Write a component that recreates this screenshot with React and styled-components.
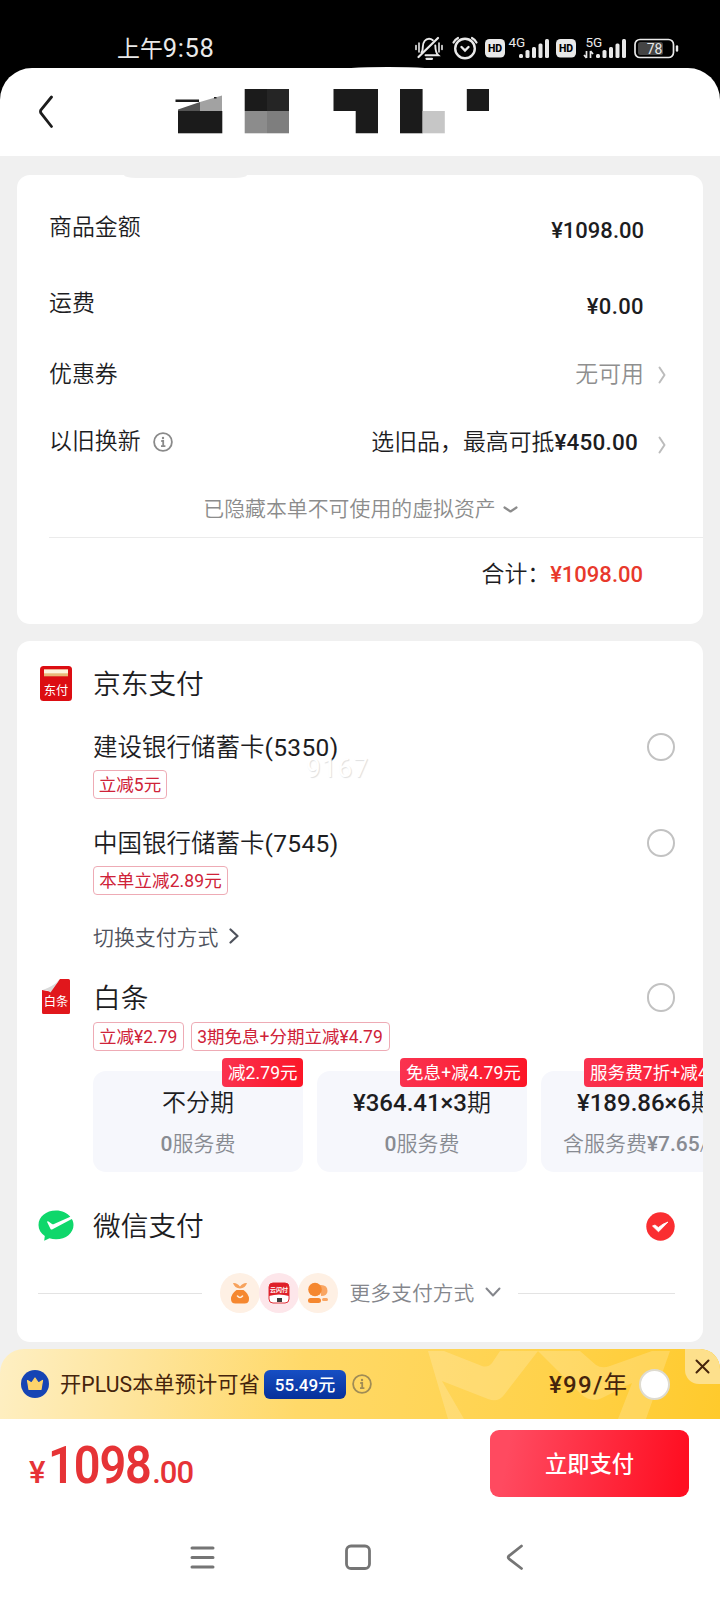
import styled, { createGlobalStyle } from 'styled-components';

const GlobalStyle = createGlobalStyle`
    * {
        box-sizing: border-box;
    }
    body {
        margin: 0;
        background-color: #f0f0f0;
        font-family: Roboto, "Noto Sans CJK SC", sans-serif;
        font-weight: 350;
        color: #1d1d1f;
    }
    svg {
        display: block;
        flex-shrink: 0;
    }
`;

const Page = styled.div`
    width: 720px;
    height: 1600px;
    display: flex;
    flex-direction: column;
    overflow: hidden;
    background-color: #f0f0f0;
`;

/* ---------- top ---------- */

const Top = styled.div`
    background-color: #000;
    height: 156px;
    flex-shrink: 0;
    display: flex;
    flex-direction: column;
`;

const StatusBar = styled.div`
    height: 68px;
    padding: 30px 41px 0 117px;
    display: flex;
    align-items: flex-start;
    justify-content: space-between;
    color: #e9e9e9;
`;

const Clock = styled.div`
    font-size: 22.9px;
    line-height: 37px;
    font-weight: 400;
    white-space: nowrap;
    b {
        font-size: 25.5px;
        font-weight: 400;
        letter-spacing: 0.6px;
    }
`;

const Header = styled.div`
    position: relative;
    height: 88px;
    padding-left: 39px;
    display: flex;
    align-items: flex-start;
    background-color: #fff;
    border-radius: 32px 32px 0 0;
    &:before {
        content: '';
        position: absolute;
        left: 336px;
        top: -1.5px;
        width: 104px;
        height: 6px;
        border-radius: 50%;
        background-color: #fff;
    }
`;

const BackButton = styled.div`
    margin-top: 27px;
    margin-right: 121px;
`;

const Title = styled.div`
    margin-top: 20px;
`;

/* ---------- cards ---------- */

const Card = styled.div`
    position: relative;
    flex-shrink: 0;
    width: 686px;
    height: ${(props) => props.$height}px;
    margin: ${(props) => props.$top}px 0 0 17px;
    padding-top: 14px;
    background-color: #fff;
    border-radius: 13px;
    overflow: hidden;
`;

const Smudge = styled.div`
    position: absolute;
    left: 107px;
    top: 0;
    width: 123px;
    height: 3px;
    background-color: #f0f0f0;
    border-radius: 0 0 12px 12px / 0 0 3px 3px;
`;

const PriceRow = styled.div`
    height: ${(props) => props.$height}px;
    padding: 2px 37px 0 32px;
    display: flex;
    align-items: center;
    font-size: 22.9px;
    line-height: 32px;
`;

const Label = styled.div`
    flex: 1;
    display: flex;
    align-items: center;
    gap: 12px;
`;

const Value = styled.div`
    margin-right: ${(props) => props.$right || 0}px;
    padding-top: ${(props) => props.$drop || 0}px;
    color: ${(props) => props.$color || '#1d1d1f'};
    white-space: nowrap;
`;

const Amount = styled.span`
    font-size: ${(props) => props.$size || 22}px;
    font-weight: 500;
    letter-spacing: ${(props) => props.$spacing || 0}px;
`;

const ArrowBox = styled.div`
    padding-top: ${(props) => props.$drop || 0}px;
`;

const HiddenNotice = styled.div`
    height: 63px;
    margin-left: 32px;
    padding: 6px 31px 0 0;
    display: flex;
    align-items: center;
    justify-content: center;
    gap: 7px;
    border-bottom: 1px solid #ebebeb;
    color: #8c8c8c;
    font-size: 20.9px;
    line-height: 30px;
`;

const TotalRow = styled.div`
    height: 73px;
    padding-right: 60px;
    display: flex;
    align-items: center;
    justify-content: flex-end;
    font-size: 22.9px;
    line-height: 32px;
    span {
        color: #e8392c;
    }
`;

/* ---------- payment ---------- */

const PayRow = styled.div`
    height: ${(props) => props.$height}px;
    margin-top: ${(props) => props.$top || 0}px;
    padding-right: 28px;
    display: flex;
    align-items: center;
`;

const IconCell = styled.div`
    width: 76px;
    padding: 0 0 ${(props) => props.$lift || 0}px 2px;
    display: flex;
    justify-content: center;
`;

const PayName = styled.div`
    flex: 1;
    padding-top: 2px;
    font-size: ${(props) => props.$size || 27.7}px;
    line-height: 40px;
    span {
        font-weight: 400;
        letter-spacing: 0.35px;
    }
`;

const Radio = styled.div`
    width: 28.5px;
    height: 28.5px;
    border: 2px solid #c2c2c2;
    border-radius: 50%;
`;

const Tags = styled.div`
    margin-left: 76px;
    display: flex;
    gap: 7px;
`;

const Tag = styled.div`
    height: 29px;
    width: ${(props) => props.$width}px;
    display: flex;
    align-items: center;
    justify-content: center;
    border: 1px solid #eeabb5;
    border-radius: 4px;
    color: #cf2238;
    font-size: 17.5px;
    font-weight: 400;
    line-height: 26px;
    white-space: nowrap;
    letter-spacing: ${(props) => props.$spacing || 0}px;
`;

const SwitchPay = styled.div`
    height: 44px;
    margin: 19px 0 0 76px;
    display: flex;
    align-items: center;
    gap: 11px;
    color: #4e525c;
    font-size: 20.9px;
`;

const Plans = styled.div`
    height: 121px;
    margin-left: 76px;
    padding-top: 20px;
    display: flex;
    gap: 14px;
    overflow: hidden;
`;

const Plan = styled.div`
    position: relative;
    flex: 0 0 210px;
    height: 101px;
    padding-top: 14px;
    background-color: #f6f7fc;
    border-radius: 13px;
    text-align: center;
    white-space: nowrap;
`;

const PlanBadge = styled.div`
    position: absolute;
    top: -13px;
    right: 0;
    width: ${(props) => props.$width}px;
    height: 29px;
    padding: 0 6px;
    border-radius: 4px;
    background: linear-gradient(100deg, #fa3350, #fc1526);
    color: #fff;
    font-size: 17.5px;
    font-weight: 400;
    line-height: 30px;
    letter-spacing: 0.1px;
    text-align: left;
`;

const PlanTitle = styled.div`
    font-size: 24px;
    line-height: 36px;
`;

const PlanFee = styled.div`
    margin-top: 7px;
    color: #888b92;
    font-size: 21px;
    line-height: 32px;
`;

const MoreRow = styled.div`
    height: 74px;
    padding: 0 28px 0 21px;
    display: flex;
    align-items: center;
`;

const Line = styled.div`
    width: ${(props) => props.$width}px;
    height: 1px;
    background-color: #e3e3e3;
`;

const MoreIcons = styled.div`
    margin-left: 18px;
    display: flex;
`;

const MoreIcon = styled.div`
    width: 40px;
    height: 40px;
    margin-right: -1px;
    display: flex;
    align-items: center;
    justify-content: center;
    border-radius: 50%;
    background-color: ${(props) => props.$bg};
`;

const MoreText = styled.div`
    flex: 1;
    margin-left: 12.5px;
    padding-bottom: 2px;
    display: flex;
    align-items: center;
    gap: 11px;
    color: #84868c;
    font-size: 20.8px;
`;

const Watermark = styled.div`
    position: absolute;
    left: 289px;
    top: 108px;
    color: #fff;
    font-size: 26px;
    font-weight: 400;
    line-height: 38px;
    letter-spacing: 1.2px;
    text-shadow: 1px 1px 1px #e0e0e0;
`;

/* ---------- plus bar ---------- */

const PlusBar = styled.div`
    position: relative;
    flex-shrink: 0;
    height: 70px;
    margin-top: 7px;
    padding-left: 21px;
    display: flex;
    align-items: center;
    border-radius: 24px 20px 0 0;
    background: linear-gradient(100deg, #feefc3 0%, #fee49a 20%, #ffd969 42%, #ffd24b 75%, #ffca2c 100%);
    overflow: hidden;
    color: #45240c;
    font-weight: 400;
    font-size: 21.2px;
    white-space: nowrap;
`;

const PlusPattern = styled.svg`
    position: absolute;
    left: 420px;
    top: 0;
`;

const PlusText = styled.div`
    margin: 0 5px 0 11px;
    width: 199px;
    line-height: 32px;
    padding-top: 1px;
    letter-spacing: 0.1px;
`;

const SaveBadge = styled.div`
    width: 82px;
    height: 29px;
    margin-right: 6px;
    border-radius: 6px;
    background: linear-gradient(#174fc4, #06309a);
    color: #fff;
    font-size: 17px;
    font-weight: 500;
    line-height: 31px;
    text-align: center;
`;

const PlusPrice = styled.div`
    position: relative;
    margin-left: 177px;
    width: 90px;
    padding-top: 2px;
    line-height: 32px;
    font-size: 23.5px;
`;

const PlusRadio = styled.div`
    position: relative;
    width: 31px;
    height: 31px;
    border: 2px solid #dedbd0;
    border-radius: 50%;
    background-color: #fff;
`;

const CloseTab = styled.div`
    position: absolute;
    right: 0;
    top: 0;
    width: 35px;
    height: 35px;
    display: flex;
    align-items: center;
    justify-content: center;
    background-color: #fde08c;
    border-radius: 0 20px 0 14px;
`;

/* ---------- bottom ---------- */

const Bottom = styled.div`
    flex: 1;
    background-color: #fff;
`;

const PayBar = styled.div`
    height: 88px;
    padding: 11px 31px 0 29px;
    display: flex;
    justify-content: space-between;
`;

const BigPrice = styled.div`
    display: flex;
    align-items: baseline;
    color: #e63336;
    font-size: 31px;
    font-weight: 500;
    line-height: 70px;
    padding-top: 1px;
    letter-spacing: -1px;
    b {
        display: inline-block;
        margin: 0 -8px 0 4px;
        font-size: 51px;
        font-weight: 600;
        letter-spacing: -1.2px;
        transform: scaleX(0.92);
        transform-origin: left;
    }
`;

const PayButton = styled.button`
    width: 199px;
    height: 67px;
    border: none;
    border-radius: 9px;
    background: linear-gradient(100deg, #ff4a60 10%, #ff0f22 95%);
    color: #fff;
    font-family: inherit;
    font-size: 22.3px;
    font-weight: 500;
    padding: 0 0 4px;
`;

const NavBar = styled.div`
    height: 93px;
    padding: 36px 0 0 189px;
    display: flex;
`;

const NavItem = styled.div`
    margin-right: ${(props) => props.$gap || 0}px;
`;


const Chevron = ({ w, h, stroke, width = 2, down }) => (
    <svg width={w} height={h} fill="none" stroke={stroke} strokeWidth={width} strokeLinecap="round" strokeLinejoin="round">
        <path d={down ? `M1.5 1.5L${w / 2} ${h - 1.5}L${w - 1.5} 1.5` : `M1.5 1.5L${w - 1.5} ${h / 2}L1.5 ${h - 1.5}`} />
    </svg>
);

const Info = ({ color }) => (
    <svg width="20" height="20" viewBox="0 0 20 20" fill="none" stroke={color} strokeWidth="1.8">
        <circle cx="10" cy="10" r="8.9" />
        <path d="M8.2 9h2v5.2M8 14.2h4.4" />
        <circle cx="10" cy="6" r="1.2" fill={color} stroke="none" />
    </svg>
);

const Signal = ({ x }) => (
    <g fill="#e9e9e9">
        <rect x={x} y="24" width="4" height="4" rx="1.5" />
        <rect x={x + 6.5} y="20" width="4" height="8" rx="1.5" />
        <rect x={x + 13} y="17" width="4" height="11" rx="1.5" />
        <rect x={x + 19.5} y="13.5" width="4" height="14.5" rx="1.5" />
        <rect x={x + 26} y="9" width="4" height="19" rx="1.5" />
    </g>
);

const Hd = ({ x }) => (
    <g>
        <rect x={x} y="9" width="20" height="18.5" rx="4.5" fill="#e9e9e9" />
        <text x={x + 10} y="22" fontSize="10.5" fontWeight="800" fill="#000" textAnchor="middle">HD</text>
    </g>
);

const StatusIcons = () => (
    <svg width="265" height="38" viewBox="0 0 265 38" fontFamily="Roboto" fontWeight="400">
        <g fill="none" stroke="#e9e9e9" strokeWidth="1.9" strokeLinecap="round">
            {/* muted bell */}
            <path d="M4.5 27L24 8" strokeWidth="2.2" />
            <path d="M7.5 22.5c1.2-1.3 1.3-2.5 1.3-5.5c0-5 2.7-8.2 6.2-8.2c1.5 0 2.8.5 3.9 1.4M21.3 15.5c.1 4.5.4 7.5 3 9.8H11.5" />
            <path d="M12.5 28.8h5.5" strokeWidth="2.2" />
            <path d="M2 15.5v4M5 13v9M25 13v9M28 15.5v4" strokeWidth="1.6" />
            {/* alarm clock */}
            <circle cx="51" cy="18.5" r="9.8" strokeWidth="2.4" />
            <path d="M47.5 17l3.5 3.5L54.5 17" strokeWidth="2.4" />
            <path d="M39.5 12.5Q41 9.5 44 8M58 8Q61 9.5 62.5 12.5" strokeWidth="2.2" />
        </g>
        <Hd x={71} />
        <text x="94.5" y="17" fontSize="13.5" fill="#e9e9e9">4G</text>
        <Signal x={105} />
        <Hd x={142} />
        <text x="171.5" y="17" fontSize="13.5" fill="#e9e9e9">5G</text>
        <path d="M172.5 21v7M172.5 28l-2.500-3M176.5 28v-7M176.5 21l2.5 3" stroke="#e9e9e9" strokeWidth="1.7" fill="none" />
        <Signal x={182} />
        <rect x="221" y="9.5" width="38.5" height="18" rx="5" fill="none" stroke="#e9e9e9" strokeWidth="1.7" />
        <rect x="224" y="12" width="25" height="13" rx="2.5" fill="#454545" />
        <path d="M263 16.5v4" stroke="#e9e9e9" strokeWidth="2.4" strokeLinecap="round" />
        <text x="240.5" y="23.5" fontSize="14" fill="#e9e9e9" textAnchor="middle">78</text>
    </svg>
);

// covered page title
const Mosaic = () => (
    <svg width="316" height="46" viewBox="175 88 316 46" fill="#1b1b1b">
        <rect x="175.5" y="99.5" width="23.5" height="2.5" />
        <path d="M178 109.5L200 102V111H178z" fill="#545454" />
        <path d="M200 102L222 95.5V111H200z" fill="#a2a2a2" />
        <rect x="214" y="97" width="2.5" height="1.5" />
        <rect x="178" y="111" width="44.3" height="22.3" />
        <rect x="244.7" y="89" width="22.3" height="22" />
        <rect x="267" y="89" width="22" height="22" fill="#252525" />
        <rect x="244.7" y="111" width="22.3" height="22.3" fill="#8c8c8c" />
        <rect x="267" y="111" width="22" height="22.3" fill="#7e7e7e" />
        <path d="M333.5 89H378V133.3H355.7V111H333.5z" />
        <rect x="400" y="89" width="22.6" height="44.3" />
        <rect x="422.6" y="111" width="22.2" height="22.3" fill="#c6c6c6" />
        <rect x="466.8" y="89" width="22.2" height="22" />
    </svg>
);

const JdPayIcon = () => (
    <svg width="32" height="35" viewBox="0 0 32 35">
        <rect width="32" height="35" rx="3.5" fill="#dc0d12" />
        <rect x="4" y="3.5" width="24" height="6.8" fill="#e8b878" />
        <rect x="4" y="3.5" width="24" height="3.8" fill="#fdf3dc" />
        <text x="16" y="28.5" fontSize="12.3" fontWeight="400" fill="#fff" textAnchor="middle">东付</text>
    </svg>
);

const BaitiaoIcon = () => (
    <svg width="28" height="35" viewBox="0 0 28 35">
        <path d="M18 0H26.5Q28 0 28 1.5V33.5Q28 35 26.5 35H1.5Q0 35 0 33.5V11L8 12.5z" fill="#e1171c" />
        <path d="M17 1.5L8.5 13.5Q6.5 10.5 0.5 11Q10 8 17 1.5z" fill="#dadada" />
        <text x="14" y="26.5" fontSize="12.3" fontWeight="400" fill="#fff" textAnchor="middle">白条</text>
    </svg>
);

const WechatPayIcon = () => (
    <svg width="36" height="32" viewBox="0 0 36 32">
        <path d="M18 0.5C8 0.5 0.5 6.8 0.5 15C0.5 19.5 2.8 23.2 6.8 26L6.2 30.8L11.5 28.3C13.5 29 15.7 29.3 18 29.3C28 29.3 35.5 23 35.5 15C35.5 12.5 34.9 10.8 33.8 9L14.5 19.3Q13.2 20 12.4 18.7L9 11.8Q9.5 10.8 10.5 11.5L14 14Q15 14.6 16 14.1L32.3 6.8C29.5 3 24 0.5 18 0.5z" fill="#0fd76b" />
    </svg>
);

const Checked = () => (
    <svg width="29" height="29" viewBox="0 0 29 29">
        <circle cx="14.5" cy="14.5" r="14.2" fill="#fa2e31" />
        <path d="M6.5 14L12.5 19.8L22 10Q17 11.5 12.3 15.5L9 13z" fill="#fff" stroke="#fff" strokeWidth="0.8" strokeLinejoin="round" />
    </svg>
);

const MoneyBag = () => (
    <svg width="20" height="22" viewBox="0 0 20 22">
        <path d="M3 1Q7 .5 10 4.5Q13 .5 17 1Q15.5 6 10 6.5Q4.5 6 3 1z" fill="#f7a25c" />
        <path d="M6.5 8H13.5Q19 12 19 17Q19 21.5 14.5 21.5H5.5Q1 21.5 1 17Q1 12 6.5 8z" fill="#f5872f" />
        <path d="M7.5 14Q10 17 12.5 14" fill="none" stroke="#fff0e0" strokeWidth="1.6" strokeLinecap="round" />
    </svg>
);

const CloudPay = () => (
    <svg width="22" height="22" viewBox="0 0 22 22">
        <rect x="1" y="1" width="20" height="20" rx="4" fill="#fff" stroke="#df3038" />
        <path d="M1 14V5Q1 1 5 1H17Q21 1 21 5V14Q11 11 1 14z" fill="#df2029" />
        <text x="11" y="10" fontSize="6" fontWeight="700" fill="#fff" textAnchor="middle">云闪付</text>
        <rect x="9" y="16" width="5" height="4" fill="#3b3b3b" />
    </svg>
);

const Friends = () => (
    <svg width="22" height="22" viewBox="0 0 22 22">
        <path d="M13 3Q20.5 2.5 20.5 9Q20.5 14 14 14z" fill="#f9a562" />
        <circle cx="8" cy="7.5" r="6.8" fill="#f5872f" />
        <rect x="1" y="16" width="13" height="5" rx="2.5" fill="#f5872f" />
        <rect x="15" y="16" width="6" height="3" rx="1.5" fill="#f9a562" />
    </svg>
);

const Crown = () => (
    <svg width="28" height="28" viewBox="0 0 28 28">
        <circle cx="14" cy="14" r="14" fill="#1544b4" />
        <path d="M6.5 10.5L10.5 13L14 8L17.5 13L21.5 10.5L20 19.5H8z" fill="#fdd36b" stroke="#fdd36b" strokeWidth="1.2" strokeLinejoin="round" />
    </svg>
);


const plans = [
    { badge: '减2.79元', width: 81, price: '', text: '不分期', fee: '0', feeText: '服务费' },
    { badge: '免息+减4.79元', width: 127, price: '¥364.41×3', text: '期', fee: '0', feeText: '服务费' },
    { badge: '服务费7折+减4.79元', width: 167, price: '¥189.86×6', text: '期', prefix: '含服务费', fee: '¥7.65', feeText: '/期' },
];

const App = () => {
    return (
        <>
            <GlobalStyle />
            <Page>
                <Top>
                    <StatusBar>
                        <Clock>上午<b>9:58</b></Clock>
                        <StatusIcons />
                    </StatusBar>
                    <Header>
                        <BackButton>
                            <svg width="15" height="34" fill="none" stroke="#1c1c1c" strokeWidth="2.8" strokeLinecap="round" strokeLinejoin="round">
                                <path d="M12.5 2L2 14.8Q1 16.5 2 18.2L12.5 31.5" />
                            </svg>
                        </BackButton>
                        <Title><Mosaic /></Title>
                    </Header>
                </Top>

                <Card $height={449} $top={19}>
                    <Smudge />
                    <PriceRow $height={76}>
                        <Label>商品金额</Label>
                        <Value $right={22} $drop={6}><Amount>¥1098.00</Amount></Value>
                    </PriceRow>
                    <PriceRow $height={76}>
                        <Label>运费</Label>
                        <Value $right={22} $drop={6}><Amount $spacing={0.4}>¥0.00</Amount></Value>
                    </PriceRow>
                    <PriceRow $height={66}>
                        <Label>优惠券</Label>
                        <Value $right={14} $color="#8f8f8f">无可用</Value>
                        <Chevron w={8} h={18} stroke="#bcbcbc" />
                    </PriceRow>
                    <PriceRow $height={68}>
                        <Label>以旧换新<Info color="#8a8a8a" /></Label>
                        <Value $right={20}>选旧品，最高可抵<Amount $size={22.5} $spacing={0.2}>¥450.00</Amount></Value>
                        <ArrowBox $drop={5}><Chevron w={8} h={18} stroke="#bcbcbc" /></ArrowBox>
                    </PriceRow>
                    <HiddenNotice>
                        已隐藏本单不可使用的虚拟资产
                        <Chevron w={15} h={7} stroke="#8c8c8c" width={2.2} down />
                    </HiddenNotice>
                    <TotalRow>
                        合计：<Amount>¥1098.00</Amount>
                    </TotalRow>
                </Card>

                <Card $height={701} $top={17}>
                    <PayRow $height={58}>
                        <IconCell $lift={2}><JdPayIcon /></IconCell>
                        <PayName>京东支付</PayName>
                    </PayRow>
                    <PayRow $height={46} $top={11}>
                        <IconCell />
                        <PayName $size={24.5}>建设银行储蓄卡<span>(5350)</span></PayName>
                        <Radio />
                    </PayRow>
                    <Tags><Tag $width={74}>立减5元</Tag></Tags>
                    <PayRow $height={46} $top={21}>
                        <IconCell />
                        <PayName $size={24.5}>中国银行储蓄卡<span>(7545)</span></PayName>
                        <Radio />
                    </PayRow>
                    <Tags><Tag $width={135} $spacing={0.1}>本单立减2.89元</Tag></Tags>
                    <SwitchPay>
                        切换支付方式
                        <Chevron w={10} h={16} stroke="#4e525c" width={2.2} />
                    </SwitchPay>
                    <PayRow $height={49} $top={15}>
                        <IconCell $lift={2}><BaitiaoIcon /></IconCell>
                        <PayName>白条</PayName>
                        <Radio />
                    </PayRow>
                    <Tags>
                        <Tag $width={90.5}>立减¥2.79</Tag>
                        <Tag $width={199}>3期免息+分期立减¥4.79</Tag>
                    </Tags>
                    <Plans>
                        {plans.map((plan) => (
                            <Plan key={plan.badge}>
                                <PlanTitle><Amount $size={24}>{plan.price}</Amount>{plan.text}</PlanTitle>
                                <PlanFee>{plan.prefix}<Amount $size={21}>{plan.fee}</Amount>{plan.feeText}</PlanFee>
                                <PlanBadge $width={plan.width}>{plan.badge}</PlanBadge>
                            </Plan>
                        ))}
                    </Plans>
                    <PayRow $height={60} $top={24}>
                        <IconCell><WechatPayIcon /></IconCell>
                        <PayName>微信支付</PayName>
                        <Checked />
                    </PayRow>
                    <MoreRow>
                        <Line $width={164} />
                        <MoreIcons>
                            <MoreIcon $bg="#fef0e4"><MoneyBag /></MoreIcon>
                            <MoreIcon $bg="#fde6ea"><CloudPay /></MoreIcon>
                            <MoreIcon $bg="#fef0e4"><Friends /></MoreIcon>
                        </MoreIcons>
                        <MoreText>
                            更多支付方式
                            <Chevron w={16} h={10} stroke="#84868c" down />
                        </MoreText>
                        <Line $width={157} />
                    </MoreRow>
                    <Watermark>9167</Watermark>
                </Card>

                <PlusBar>
                    <PlusPattern width="300" height="70" fill="#fff" fillOpacity="0.18">
                        <path d="M8 2H24L62 17Q68 19 72 14L80 2H118L84 46Q78 54 68 50L22 32L44 70H28z" />
                        <path d="M118 2H160L176 16Q182 20 190 17L232 2H250L226 70H198L212 34L182 49Q172 54 162 46z" />
                    </PlusPattern>
                    <Crown />
                    <PlusText>开PLUS本单预计可省</PlusText>
                    <SaveBadge>55.49元</SaveBadge>
                    <Info color="#a08c55" />
                    <PlusPrice><Amount $size={24} $spacing={1.3}>¥99/</Amount>年</PlusPrice>
                    <PlusRadio />
                    <CloseTab>
                        <svg width="15" height="15" stroke="#45240c" strokeWidth="2" strokeLinecap="round">
                            <path d="M1.5 1.5L13.5 13.5M13.5 1.5L1.5 13.5" />
                        </svg>
                    </CloseTab>
                </PlusBar>

                <Bottom>
                    <PayBar>
                        <BigPrice>¥<b>1098</b>.00</BigPrice>
                        <PayButton>立即支付</PayButton>
                    </PayBar>
                    <NavBar>
                        <NavItem $gap={128}>
                            <svg width="27" height="28" stroke="#757575" strokeWidth="3" strokeLinecap="round">
                                <path d="M3 5H24M3 14.5H24M3 24H24" />
                            </svg>
                        </NavItem>
                        <NavItem $gap={134}>
                            <svg width="28" height="28" fill="none" stroke="#757575" strokeWidth="2.8">
                                <rect x="2.5" y="3" width="23" height="22.5" rx="4.5" />
                            </svg>
                        </NavItem>
                        <NavItem>
                            <svg width="18" height="28" fill="none" stroke="#757575" strokeWidth="2.8" strokeLinecap="round" strokeLinejoin="round">
                                <path d="M15.5 3L3 12.8Q1.5 14.3 3 15.8L15.5 25.5" />
                            </svg>
                        </NavItem>
                    </NavBar>
                </Bottom>
            </Page>
        </>
    );
};


export default App;
